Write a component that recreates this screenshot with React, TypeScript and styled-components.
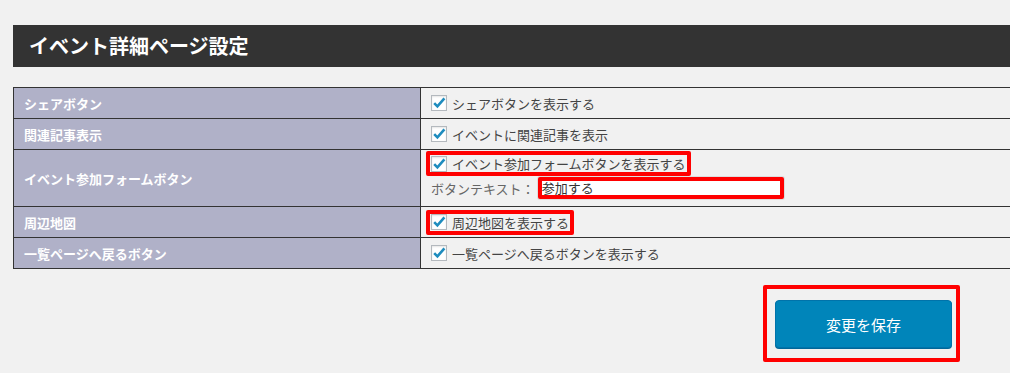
import React from "react";
import styled, { createGlobalStyle } from "styled-components";

const GlobalStyle = createGlobalStyle`
  html, body {
    margin: 0;
    padding: 0;
    background: #f1f1f1;
    overflow: hidden;
  }
  body {
    font-family: "Noto Sans CJK JP", "Noto Sans", "Liberation Sans", sans-serif;
    color: #444;
  }
`;

const Page = styled.div`
  padding: 25px 0 0 13px;
  width: 1010px;
  box-sizing: border-box;
  overflow: hidden;
`;

const Header = styled.h2`
  margin: 0 -30px 0 0;
  height: 42px;
  background: #333333;
  color: #ffffff;
  font-size: 20px;
  font-weight: 700;
  line-height: 42px;
  padding-left: 16px;
`;

const Grid = styled.div`
  margin: 20px -30px 0 0;
  display: grid;
  grid-template-columns: 406px 1fr;
  gap: 1px;
  background: #333333;
  border: 1px solid #333333;
`;

const LabelCell = styled.div<{ $tall?: boolean }>`
  background: #b0b1c8;
  color: #ffffff;
  font-size: 13px;
  font-weight: 700;
  height: ${(p) => (p.$tall ? 56 : 30)}px;
  display: flex;
  align-items: center;
  padding-left: 10px;
`;

const ValueCell = styled.div<{ $stack?: boolean }>`
  background: #f1f1f1;
  height: ${(p) => (p.$stack ? 56 : 30)}px;
  box-sizing: border-box;
  display: flex;
  flex-direction: ${(p) => (p.$stack ? "column" : "row")};
  align-items: ${(p) => (p.$stack ? "flex-start" : "center")};
  padding: ${(p) => (p.$stack ? "1px 10px 0 10px" : "0 10px")};
  gap: 1px;
`;

const CheckLabel = styled.label`
  display: inline-flex;
  align-items: center;
  gap: 5px;
  font-size: 13px;
  color: #444;
  white-space: nowrap;
  line-height: 17px;
`;

const Highlight = styled.div`
  display: inline-flex;
  align-items: center;
  border: 4px solid #ff0000;
  border-radius: 2px;
  margin-left: -5px;
  padding: 0 1px 0 1px;
  height: 17px;
`;

const TextRow = styled.div`
  display: flex;
  align-items: center;
  gap: 3px;
  height: 22px;
`;

const FieldLabel = styled.span`
  font-size: 13px;
  color: #666;
  white-space: nowrap;
`;

const TextInput = styled.div`
  width: 238px;
  height: 14px;
  border: 4px solid #ff0000;
  border-radius: 2px;
  background: #ffffff;
  box-shadow: 0 0 0 1px #dddddd;
  font-size: 13px;
  line-height: 14px;
  color: #333;
  padding-left: 0;
  white-space: nowrap;
`;

const Footer = styled.div`
  display: flex;
  justify-content: flex-end;
  padding: 16px 50px 0 0;
`;

const ButtonFrame = styled.div`
  border: 4px solid #ff0000;
  border-radius: 2px;
  padding: 11px 4px 10px 8px;
`;

const SaveButton = styled.button`
  width: 177px;
  height: 48px;
  box-sizing: border-box;
  background: #0085ba;
  border: 1px solid #0073aa;
  border-radius: 4px;
  box-shadow: 0 1px 0 #006799;
  color: #ffffff;
  font-family: "Noto Sans CJK JP", "Noto Sans", sans-serif;
  font-size: 15px;
  cursor: pointer;
`;

const Box = styled.span`
  width: 16px;
  height: 16px;
  flex: 0 0 16px;
  box-sizing: border-box;
  border: 1px solid #b4b9be;
  background: #ffffff;
  box-shadow: inset 0 1px 2px rgba(0, 0, 0, 0.1);
  display: inline-flex;
  align-items: center;
  justify-content: center;
  overflow: visible;
`;

const Checkbox = () => (
  <Box>
    <svg width="14" height="14" viewBox="0 0 14 14" style={{ overflow: "visible" }}>
      <path d="M2.2 7.2 L5.4 10.4 L12.4 2.4" fill="none" stroke="#1e8cbe" strokeWidth="2.6" strokeLinecap="butt" strokeLinejoin="miter" />
    </svg>
  </Box>
);

const Check = ({ text }: { text: string }) => (
  <CheckLabel>
    <Checkbox />
    {text}
  </CheckLabel>
);

export default function App() {
  return (
    <>
      <GlobalStyle />
      <Page>
        <Header>イベント詳細ページ設定</Header>
        <Grid>
          <LabelCell>シェアボタン</LabelCell>
          <ValueCell>
            <Check text="シェアボタンを表示する" />
          </ValueCell>

          <LabelCell>関連記事表示</LabelCell>
          <ValueCell>
            <Check text="イベントに関連記事を表示" />
          </ValueCell>

          <LabelCell $tall>イベント参加フォームボタン</LabelCell>
          <ValueCell $stack>
            <Highlight>
              <Check text="イベント参加フォームボタンを表示する" />
            </Highlight>
            <TextRow>
              <FieldLabel>ボタンテキスト：</FieldLabel>
              <TextInput>参加する</TextInput>
            </TextRow>
          </ValueCell>

          <LabelCell>周辺地図</LabelCell>
          <ValueCell>
            <Highlight>
              <Check text="周辺地図を表示する" />
            </Highlight>
          </ValueCell>

          <LabelCell>一覧ページへ戻るボタン</LabelCell>
          <ValueCell>
            <Check text="一覧ページへ戻るボタンを表示する" />
          </ValueCell>
        </Grid>
        <Footer>
          <ButtonFrame>
            <SaveButton>変更を保存</SaveButton>
          </ButtonFrame>
        </Footer>
      </Page>
    </>
  );
}
